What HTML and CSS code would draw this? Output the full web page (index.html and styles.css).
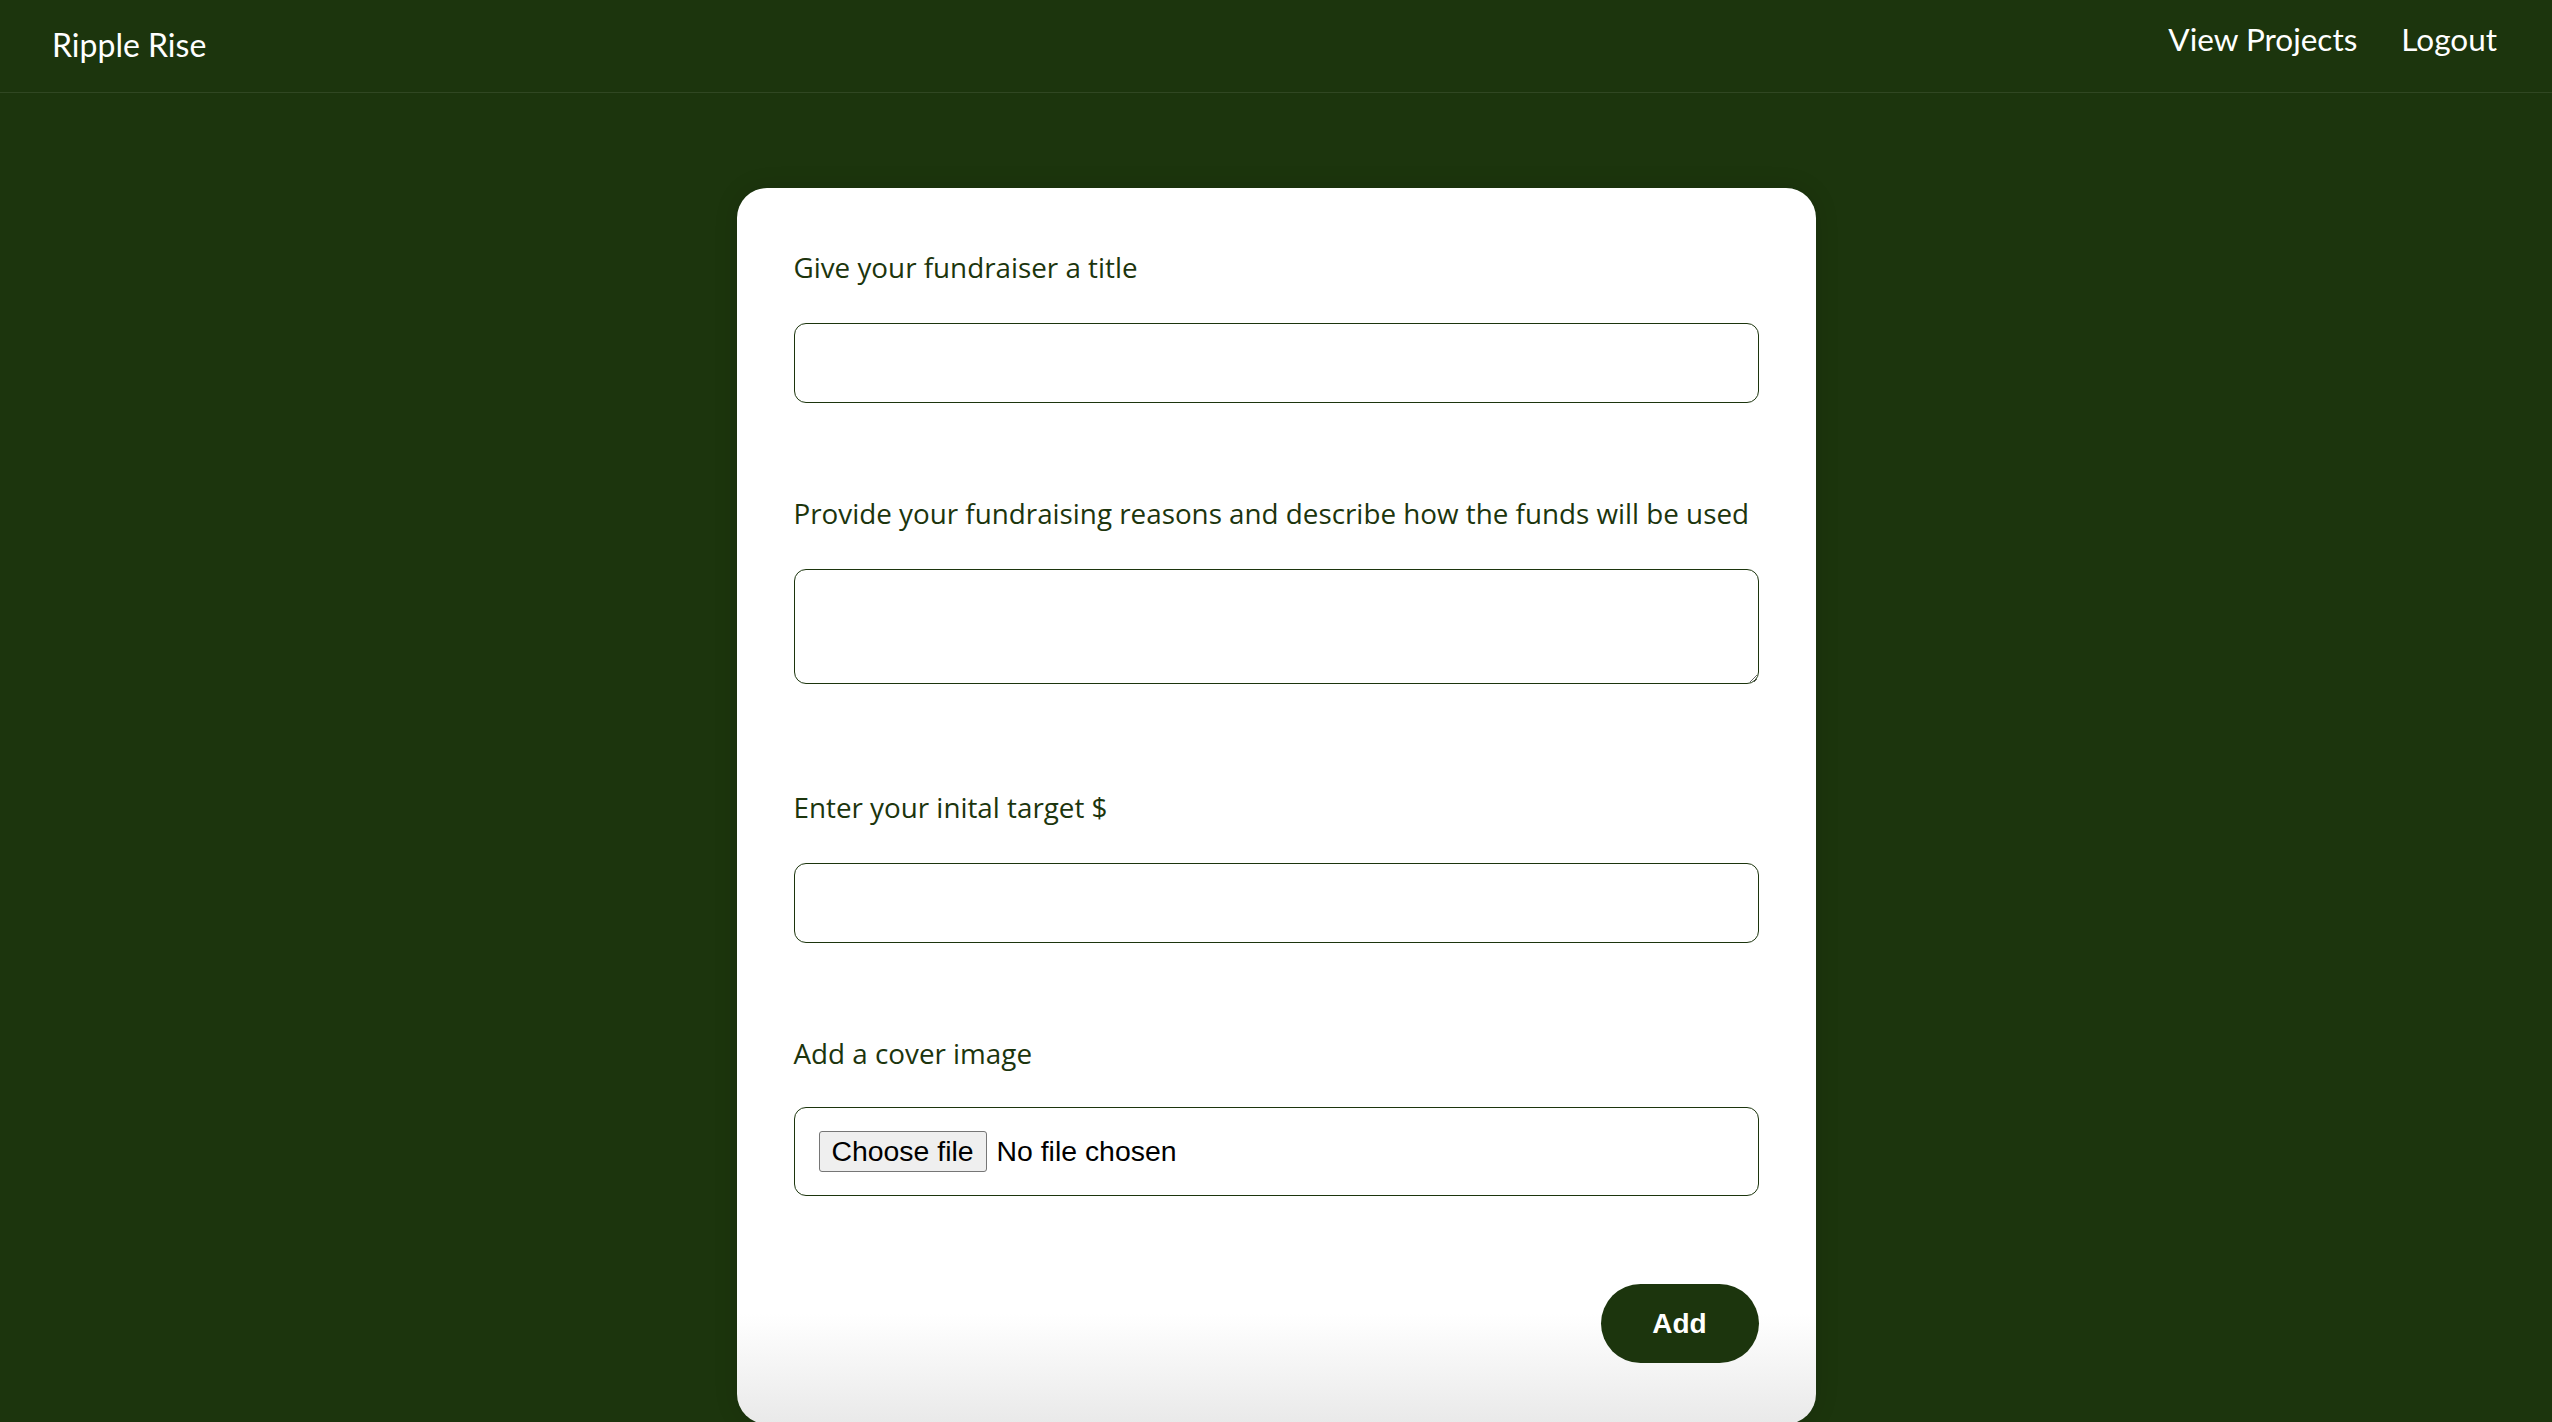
FILE: index.html
```html
<!DOCTYPE html>
<html lang="en">
<head>
   <meta charset="UTF-8">
   <meta name="viewport" content="width=device-width, initial-scale=1">
   <link rel="stylesheet" href="styles.css">
   <title>Ripple Rise</title>
</head>

<body>

   <header class="topo">
      <a href="#" class="marca">Ripple Rise</a>

      <nav class="menu">
         <a href="#">View Projects</a>
         <a href="#">Logout</a>
      </nav>
   </header>

   <main class="conteudo">
      <form class="cartao">
         <div class="campo">
            <label for="titulo">Give your fundraiser a title</label>
            <input type="text" id="titulo" class="caixa">
         </div>

         <div class="campo alto">
            <label for="descricao">Provide your fundraising reasons and describe how the funds will be used</label>
            <textarea id="descricao" class="caixa texto"></textarea>
         </div>

         <div class="campo">
            <label for="meta">Enter your inital target $</label>
            <input type="number" id="meta" class="caixa">
         </div>

         <div class="campo arquivo">
            <label for="imagem">Add a cover image</label>
            <label class="caixa seletor">
               <span class="escolher">Choose file</span>
               <span class="nome">No file chosen</span>
               <input type="file" id="imagem" hidden>
            </label>
         </div>

         <div class="acoes">
            <button type="submit" class="adicionar">Add</button>
         </div>
      </form>
   </main>

</body>
</html>
```

FILE: styles.css
```css
* {
   margin:0;
   padding:0;
   box-sizing:border-box;
}

body {
   background:#1c350d;
   font-family:"Open Sans", Lato, sans-serif;
   color:#1c350d;
   min-height:100vh;
}

a {
   color:#fff;
   text-decoration:none;
}

/* barra do topo */
.topo {
   display:flex;
   justify-content:space-between;
   align-items:flex-start;
   height:93px;
   padding:0 55px 0 52px;
   border-bottom:1px solid rgba(255,255,255,.09);
   font-family:Lato, sans-serif;
}

.marca {
   font-size:32px;
   line-height:1;
   margin-top:29px;
}

.menu {
   display:flex;
   gap:44px;
   margin-top:24px;
}

.menu a {
   font-size:31.5px;
   line-height:1;
}

/* cartao do formulario */
.conteudo {
   display:flex;
   justify-content:center;
   padding-top:95px;
}

.cartao {
   width:1079px;
   background:linear-gradient(to bottom, #fff calc(100% - 110px), #e9e9e9 100%);
   border-radius:30px;
   padding:64px 57px 61px;
   box-shadow:0 0 24px rgba(0,0,0,.12);
}

.campo {
   display:flex;
   flex-direction:column;
   gap:40px;
   margin-bottom:95px;
}

.campo.alto {
   margin-bottom:108px;
}

.campo.arquivo {
   gap:38px;
   margin-bottom:88px;
}

.campo > label:first-child {
   font-size:27.8px;
   line-height:31px;
}

.caixa {
   width:100%;
   height:80px;
   border:1px solid #1c350d;
   border-radius:12px;
   background:#fff;
   font-size:26px;
   padding:0 20px;
   outline:0;
}

.caixa.texto {
   height:115px;
   font-family:inherit;
   padding:12px 20px;
}

/* campo de arquivo */
.caixa.seletor {
   display:flex;
   align-items:center;
   height:89px;
   padding:0 24px;
   font-family:"Liberation Sans", Arial, sans-serif;
   font-size:28.4px;
   color:#000;
   cursor:pointer;
}

.escolher {
   line-height:31px;
   height:41px;
   padding:4px 12px;
   margin-right:10px;
   background:#efefef;
   border:1px solid #767676;
   border-radius:3px;
}

.acoes {
   display:flex;
   justify-content:flex-end;
}

.adicionar {
   width:158px;
   height:79px;
   border-radius:40px;
   background:#1c350d;
   color:#fff;
   font-family:"Liberation Sans", Arial, sans-serif;
   font-weight:bold;
   font-size:28px;
   cursor:pointer;
   border:0;
}
```
